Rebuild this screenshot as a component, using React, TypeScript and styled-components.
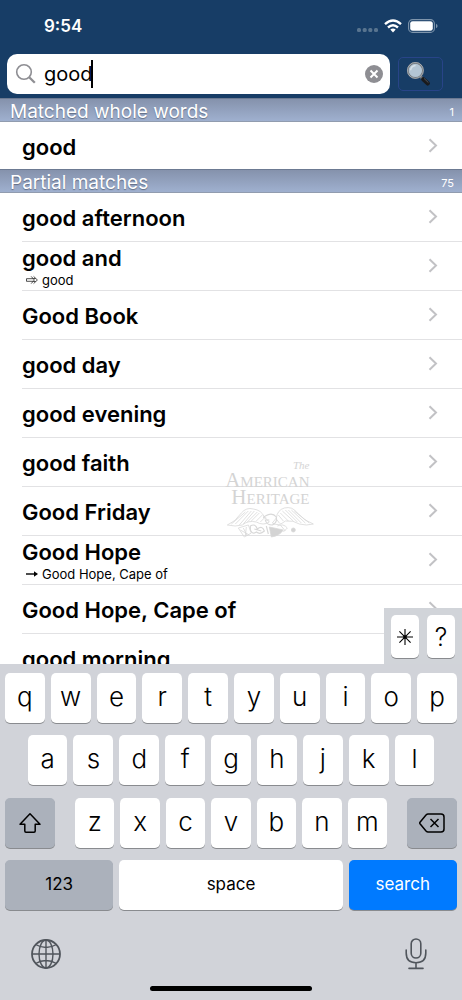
import React from "react";
import styled, { createGlobalStyle, css } from "styled-components";

const GlobalStyle = createGlobalStyle`
  *, *::before, *::after { box-sizing: border-box; }
  body {
    margin: 0;
    background: #fff;
    font-family: Inter, "Liberation Sans", sans-serif;
    color: #000;
  }
  button, input { font: inherit; color: inherit; }
  ul { list-style: none; margin: 0; padding: 0; }
`;

const Screen = styled.div`
  display: flex;
  flex-direction: column;
  height: 100vh;
  overflow: hidden;
`;

/* ---------- header ---------- */

const Header = styled.header`
  flex: none;
  background: #173d66;
  color: #fff;
`;

const StatusBar = styled.div`
  display: flex;
  align-items: center;
  justify-content: space-between;
  height: 54px;
  padding: 0 24px 3px 44px;
`;

const Clock = styled.time`
  font-size: 17px;
  line-height: 20px;
  font-weight: 600;
`;

const StatusIcons = styled.div`
  display: flex;
  align-items: center;
  gap: 6px;
`;

const SearchBar = styled.form`
  display: flex;
  align-items: center;
  gap: 8px;
  padding: 0 19px 4px 7px;
`;

const SearchField = styled.label`
  flex: 1;
  display: flex;
  align-items: center;
  height: 40px;
  padding: 0 6px 0 8px;
  border-radius: 10px;
  background: #fff;
  color: #000;
`;

const SearchInput = styled.input`
  field-sizing: content;
  min-width: 0;
  margin-left: 7px;
  padding: 0;
  border: 0;
  outline: 0;
  background: none;
  font-size: 20px;
  line-height: 28px;
`;

const Caret = styled.span`
  width: 2px;
  height: 28px;
  margin-left: -2px;
  background: #000;
`;

const ClearButton = styled.button`
  display: flex;
  margin-left: auto;
  padding: 0;
  border: 0;
  background: none;
`;

const GlassButton = styled.button`
  display: flex;
  align-items: center;
  width: 45px;
  height: 34px;
  padding: 0 0 0 7px;
  border: 1px solid #284488;
  border-radius: 5px;
  background: none;
`;

/* ---------- results ---------- */

const Results = styled.main`
  position: relative;
  flex: 1;
  min-height: 0;
`;

const Scroller = styled.div`
  height: 100%;
  overflow-y: auto;
  scrollbar-width: none;
`;

const SectionHeader = styled.h2`
  display: flex;
  align-items: center;
  justify-content: space-between;
  height: 24px;
  margin: 0;
  padding: 3px 8px 0 10px;
  border-top: 1px solid #6c7a92;
  border-bottom: 1px solid #919caf;
  background: linear-gradient(#8592ac, #9fb0cf);
  color: #fff;
  font-size: 19px;
  line-height: 20px;
  font-weight: 400;
  text-shadow: 0 1px 1px rgba(60, 70, 90, 0.6);
`;

const Count = styled.span`
  font-size: 11px;
  font-weight: 400;
  text-shadow: none;
`;

const Entry = styled.li<{ $last?: boolean }>`
  display: flex;
  height: ${(p) => (p.$last ? 47 : 49)}px;
  margin-left: 22px;
  border-bottom: ${(p) => (p.$last ? "0" : "1px solid #e2e2e4")};
`;

const EntryLink = styled.a`
  flex: 1;
  display: flex;
  align-items: center;
  justify-content: space-between;
  padding-right: 24px;
  color: inherit;
  text-decoration: none;
`;

const EntryText = styled.span`
  padding-top: 2px;
`;

const Word = styled.span`
  display: block;
  font-size: 22px;
  line-height: 26px;
  font-weight: 600;
`;

const CrossReference = styled.span`
  display: flex;
  align-items: center;
  gap: 4px;
  padding-left: 4px;
  font-size: 13px;
  line-height: 19px;
`;

const Watermark = styled.div`
  position: absolute;
  left: 58.4%;
  bottom: 126px;
  display: flex;
  flex-direction: column;
  align-items: flex-end;
  transform: translateX(-50%);
  pointer-events: none;
  color: #d4d4d4;
  font-family: "Liberation Serif", serif;
`;

const WatermarkThe = styled.span`
  padding-right: 5px;
  font-size: 11px;
  line-height: 14px;
  font-style: italic;
`;

const WatermarkWord = styled.span`
  padding-right: 5px;
  font-size: 21px;
  line-height: 17px;
  font-variant: small-caps;
`;

/* ---------- keyboard ---------- */

const keySurface = css`
  display: flex;
  align-items: center;
  justify-content: center;
  padding: 0;
  border: 0;
  border-radius: 5px;
  box-shadow: 0 1px 0 #898b8f;
`;

const Accessory = styled.div`
  position: absolute;
  right: 0;
  bottom: 0;
  display: flex;
  gap: 8px;
  padding: 7px 7px 6px 7px;
  background: #d1d4d9;
`;

const AccessoryKey = styled.button`
  ${keySurface}
  width: 28px;
  height: 43px;
  background: #fff;
  font-size: 25px;
  line-height: 28px;
  font-weight: 300;
`;

const Keyboard = styled.section`
  flex: none;
  padding: 9px 5px;
  background: #d1d3d9;
`;

const KeyRows = styled.div`
  display: flex;
  flex-direction: column;
  justify-content: space-between;
  height: 237px;
`;

const KeyRow = styled.div<{ $inset?: boolean }>`
  display: flex;
  gap: 6px;
  padding: 0 ${(p) => (p.$inset ? "5%" : "0")};
`;

const LetterGroup = styled.div`
  flex: 1;
  display: flex;
  gap: 6px;
  margin: 0 14px;
`;

type Tone = "light" | "dark" | "blue";
const tones: Record<Tone, string> = { light: "#fff", dark: "#abb1bb", blue: "#007aff" };

const LetterKey = styled.button`
  ${keySurface}
  flex: 1 1 0;
  min-width: 0;
  height: 50px;
  padding-bottom: 2px;
  background: #fff;
  font-size: 26px;
  line-height: 32px;
  font-weight: 300;
`;

const WideKey = styled.button<{ $tone: Tone; $width: string }>`
  ${keySurface}
  flex: none;
  width: ${(p) => p.$width};
  height: 50px;
  padding-bottom: 2px;
  background: ${(p) => tones[p.$tone]};
  color: ${(p) => (p.$tone === "blue" ? "#fff" : "#000")};
  font-size: 17px;
  line-height: 24px;
`;

const SpaceKey = styled(WideKey)`
  flex: 1;
`;

const BottomBar = styled.div`
  display: flex;
  align-items: center;
  justify-content: space-between;
  height: 76px;
  padding: 12px 30px 0 26px;
`;

const PlainButton = styled.button`
  display: flex;
  padding: 0;
  border: 0;
  background: none;
  color: #50555c;
`;

const HomeIndicator = styled.div`
  width: 36%;
  height: 5px;
  margin: 0 auto;
  border-radius: 3px;
  background: #000;
`;

/* ---------- drawings ---------- */

const SignalDots = () => (
  <svg width="21" height="14" viewBox="0 0 21 14" fill="#58748f" aria-hidden="true">
    <rect x="0" y="9" width="4" height="4" rx="1.5" />
    <rect x="5.7" y="9" width="4" height="4" rx="1.5" />
    <rect x="11.3" y="9" width="4" height="4" rx="1.5" />
    <rect x="17" y="9" width="4" height="4" rx="1.5" />
  </svg>
);

const WifiIcon = () => (
  <svg width="18" height="14" viewBox="0 0 18 14" fill="none" stroke="#fff" strokeWidth="2.4" aria-hidden="true">
    <path d="M1 5.1 Q9 -2.1 17 5.1" />
    <path d="M4 8.5 Q9 4 14 8.5" />
    <path d="M6.3 10.6 Q9 8.4 11.7 10.6 L9 13.4Z" fill="#fff" stroke="none" />
  </svg>
);

const BatteryIcon = () => (
  <svg width="30" height="14" viewBox="0 0 30 14" aria-hidden="true">
    <rect x=".6" y=".6" width="25.8" height="12.8" rx="4" fill="none" stroke="#7e95ac" strokeWidth="1.1" />
    <rect x="2.2" y="2.2" width="22.6" height="9.6" rx="2.4" fill="#fff" />
    <path d="M28 4.7 Q29.6 5.4 29.6 7 Q29.6 8.6 28 9.3Z" fill="#7e95ac" />
  </svg>
);

const SearchIcon = () => (
  <svg width="22" height="22" viewBox="0 0 22 22" fill="none" stroke="#8e8e93" aria-hidden="true">
    <circle cx="9" cy="9" r="7.3" strokeWidth="1.6" />
    <path d="M14.2 14.2 L19.8 19.8" strokeWidth="2.3" />
  </svg>
);

const ClearIcon = () => (
  <svg width="20" height="20" viewBox="0 0 20 20" aria-hidden="true">
    <circle cx="10" cy="10" r="9" fill="#8e8e93" />
    <path d="M6.5 6.5 L13.5 13.5 M13.5 6.5 L6.5 13.5" stroke="#fff" strokeWidth="2" />
  </svg>
);

const GlassIcon = () => (
  <svg width="26" height="26" viewBox="0 0 26 26" aria-hidden="true">
    <path d="M14.5 15.5 L18 19" stroke="#777b80" strokeWidth="2.6" />
    <path d="M17.2 18.2 L21.8 22.4" stroke="#191a1c" strokeWidth="4.2" strokeLinecap="round" />
    <path d="M18 17.4 L22.4 21.6" stroke="#55585c" strokeWidth=".9" />
    <circle cx="9.4" cy="9.4" r="7.6" fill="#b3c5d4" stroke="#6c7278" strokeWidth="1.8" />
    <circle cx="9.4" cy="9.4" r="7.9" fill="none" stroke="#d0d5d9" strokeWidth=".6" />
    <path d="M4.6 9.2 Q5 4.8 9.6 4.4" fill="none" stroke="#d5e0e8" strokeWidth="1.5" />
  </svg>
);

const Chevron = () => (
  <svg width="10" height="16" viewBox="0 0 10 16" fill="none" stroke="#c2c2c5" strokeWidth="2" aria-hidden="true">
    <path d="M1.5 1.2 L8 7.5 L1.5 13.8" />
  </svg>
);

const DoubleArrow = () => (
  <svg width="12" height="10" viewBox="0 0 12 10" fill="none" stroke="#222" strokeWidth=".8" aria-hidden="true">
    <path d="M.5 3.7 H7.5 M.5 6.3 H7.5 M.5 3.7 V6.3 M5.2 1.4 L8.4 5 L5.2 8.6 M7.6 1.4 L11.4 5 L7.6 8.6 M7.4 3.5 H9.6 M7.4 6.5 H9.6" />
  </svg>
);

const SolidArrow = () => (
  <svg width="12" height="10" viewBox="0 0 12 10" aria-hidden="true">
    <path d="M0 5 H9" stroke="#000" strokeWidth="1.4" />
    <path d="M8 2.2 L12 5 L8 7.8Z" />
  </svg>
);

const Eagle = () => (
  <svg width="88" height="32" viewBox="0 0 88 32" fill="none" stroke="#d8d8d8" strokeWidth=".8" aria-hidden="true">
    <path d="M1 19 Q9 16 15 7 Q20 1 27 3 Q35 4 38 11 L43 16 Q37 20 30 16 Q22 14 16 19 Q9 21 1 19Z" />
    <path d="M87 18 Q78 15 71 7 Q66 0 58 2 Q51 4 50 12 L46 17 Q52 21 59 15 Q67 14 73 18 Q80 20 87 18Z" />
    <path d="M5 18 L19 6 M9 18 L22 5 M13 19 L25 5 M17 18 L28 5 M21 16 L31 6 M25 15 L33 7 M30 15 L36 9 M34 16 L38 12" />
    <path d="M83 17 L68 5 M79 17 L65 4 M75 17 L62 4 M71 16 L59 4 M67 15 L56 5 M62 15 L54 7 M57 15 L52 9 M53 17 L50 13" />
    <path d="M39 10 Q46 6 50 11 Q51 17 46 19 Q40 19 39 14 L43 14 M39 10 Q35 12 40 12" strokeWidth="1.2" />
    <path d="M12 22 L22 19 L25 27 L18 31Z M14 24 L23 29 M17 22 L21 30 M20 21 L19 30" />
    <path d="M24 20 Q29 17 31 23 Q36 19 38 25 Q34 29 30 26 Q26 29 24 24Z M28 23 L35 25 M40 20 L42 28" strokeWidth="1.2" />
    <path d="M43 21 L57 24 Q53 30 45 31Z" fill="#d4d4d4" />
    <path d="M51 20 Q57 17 61 22 L57 26 M54 19 L59 25" />
    <circle cx="67" cy="24" r="2" fill="#d4d4d4" />
  </svg>
);

const AsteriskIcon = () => (
  <svg width="18" height="18" viewBox="0 0 18 18" stroke="#000" strokeWidth="1.1" aria-hidden="true">
    <path d="M9 1 V17 M1 9 H17 M3.4 3.4 L14.6 14.6 M14.6 3.4 L3.4 14.6" />
    <circle cx="9" cy="9" r="1.7" stroke="none" />
  </svg>
);

const ShiftIcon = () => (
  <svg width="24" height="22" viewBox="0 0 24 22" fill="none" stroke="#000" strokeWidth="1.5" strokeLinejoin="round" aria-hidden="true">
    <path d="M12 2.8 L22 13.2 H17.2 V20 Q17.2 21.2 16 21.2 H8 Q6.8 21.2 6.8 20 V13.2 H2Z" />
  </svg>
);

const DeleteIcon = () => (
  <svg width="26" height="22" viewBox="0 0 26 22" fill="none" stroke="#000" strokeWidth="1.5" strokeLinejoin="round" aria-hidden="true">
    <path d="M9 3 H22 Q25 3 25 6 V18 Q25 21 22 21 H9 Q8 21 7 20 L1 12.7 Q.5 12 1 11.3 L7 4 Q8 3 9 3Z" />
    <path d="M11.5 8 L19.5 16 M19.5 8 L11.5 16" />
  </svg>
);

const GlobeIcon = () => (
  <svg width="30" height="30" viewBox="0 0 30 30" fill="none" stroke="currentColor" strokeWidth="1.4" aria-hidden="true">
    <circle cx="15" cy="15" r="14" strokeWidth="1.8" />
    <ellipse cx="15" cy="15" rx="7" ry="14" />
    <path d="M15 1 V29 M1 15 H29 M4.5 5.5 Q15 11.5 25.5 5.5 M4.5 24.5 Q15 18.5 25.5 24.5" />
  </svg>
);

const MicIcon = () => (
  <svg width="22" height="32" viewBox="0 0 22 32" fill="none" stroke="currentColor" strokeWidth="1.6" strokeLinecap="round" aria-hidden="true">
    <rect x="6.2" y="1" width="9.6" height="19" rx="4.8" />
    <path d="M1.2 12 V15 Q1.2 24.7 11 24.7 Q20.8 24.7 20.8 15 V12 M11 24.7 V30.4 M4 30.4 H18" />
  </svg>
);

/* ---------- data ---------- */

type Item = { word: string; reference?: string; arrow?: "double" | "solid" };

const partialMatches: Item[] = [
  { word: "good afternoon" },
  { word: "good and", reference: "good", arrow: "double" },
  { word: "Good Book" },
  { word: "good day" },
  { word: "good evening" },
  { word: "good faith" },
  { word: "Good Friday" },
  { word: "Good Hope", reference: "Good Hope, Cape of", arrow: "solid" },
  { word: "Good Hope, Cape of" },
  { word: "good morning" },
];

const ResultRow = ({ item, last }: { item: Item; last?: boolean }) => (
  <Entry $last={last}>
    <EntryLink href="#">
      <EntryText>
        <Word>{item.word}</Word>
        {item.reference && (
          <CrossReference>
            {item.arrow === "double" ? <DoubleArrow /> : <SolidArrow />}
            {item.reference}
          </CrossReference>
        )}
      </EntryText>
      <Chevron />
    </EntryLink>
  </Entry>
);

const Letters = ({ keys }: { keys: string }) => (
  <>
    {keys.split("").map((letter) => (
      <LetterKey key={letter} type="button">
        {letter}
      </LetterKey>
    ))}
  </>
);

export default function App() {
  return (
    <Screen>
      <GlobalStyle />
      <Header>
        <StatusBar>
          <Clock>9:54</Clock>
          <StatusIcons>
            <SignalDots />
            <WifiIcon />
            <BatteryIcon />
          </StatusIcons>
        </StatusBar>
        <SearchBar onSubmit={(e) => e.preventDefault()}>
          <SearchField>
            <SearchIcon />
            <SearchInput type="text" aria-label="Search" defaultValue="good" />
            <Caret />
            <ClearButton type="button" aria-label="Clear">
              <ClearIcon />
            </ClearButton>
          </SearchField>
          <GlassButton type="submit" aria-label="Search options">
            <GlassIcon />
          </GlassButton>
        </SearchBar>
      </Header>

      <Results>
        <Scroller>
          <SectionHeader>
            Matched whole words <Count>1</Count>
          </SectionHeader>
          <ul>
            <ResultRow item={{ word: "good" }} last />
          </ul>
          <SectionHeader>
            Partial matches <Count>75</Count>
          </SectionHeader>
          <ul>
            {partialMatches.map((item) => (
              <ResultRow key={item.word} item={item} />
            ))}
          </ul>
        </Scroller>
        <Watermark>
          <WatermarkThe>The</WatermarkThe>
          <WatermarkWord>American</WatermarkWord>
          <WatermarkWord>Heritage</WatermarkWord>
          <Eagle />
        </Watermark>
        <Accessory>
          <AccessoryKey type="button" aria-label="Wildcard">
            <AsteriskIcon />
          </AccessoryKey>
          <AccessoryKey type="button">?</AccessoryKey>
        </Accessory>
      </Results>

      <Keyboard aria-label="Keyboard">
        <KeyRows>
          <KeyRow>
            <Letters keys="qwertyuiop" />
          </KeyRow>
          <KeyRow $inset>
            <Letters keys="asdfghjkl" />
          </KeyRow>
          <KeyRow>
            <WideKey type="button" $tone="dark" $width="50px" aria-label="Shift">
              <ShiftIcon />
            </WideKey>
            <LetterGroup>
              <Letters keys="zxcvbnm" />
            </LetterGroup>
            <WideKey type="button" $tone="dark" $width="50px" aria-label="Delete">
              <DeleteIcon />
            </WideKey>
          </KeyRow>
          <KeyRow>
            <WideKey type="button" $tone="dark" $width="24%">
              123
            </WideKey>
            <SpaceKey type="button" $tone="light" $width="auto">
              space
            </SpaceKey>
            <WideKey type="button" $tone="blue" $width="24%">
              search
            </WideKey>
          </KeyRow>
        </KeyRows>
        <BottomBar>
          <PlainButton type="button" aria-label="Next keyboard">
            <GlobeIcon />
          </PlainButton>
          <PlainButton type="button" aria-label="Dictate">
            <MicIcon />
          </PlainButton>
        </BottomBar>
        <HomeIndicator />
      </Keyboard>
    </Screen>
  );
}
